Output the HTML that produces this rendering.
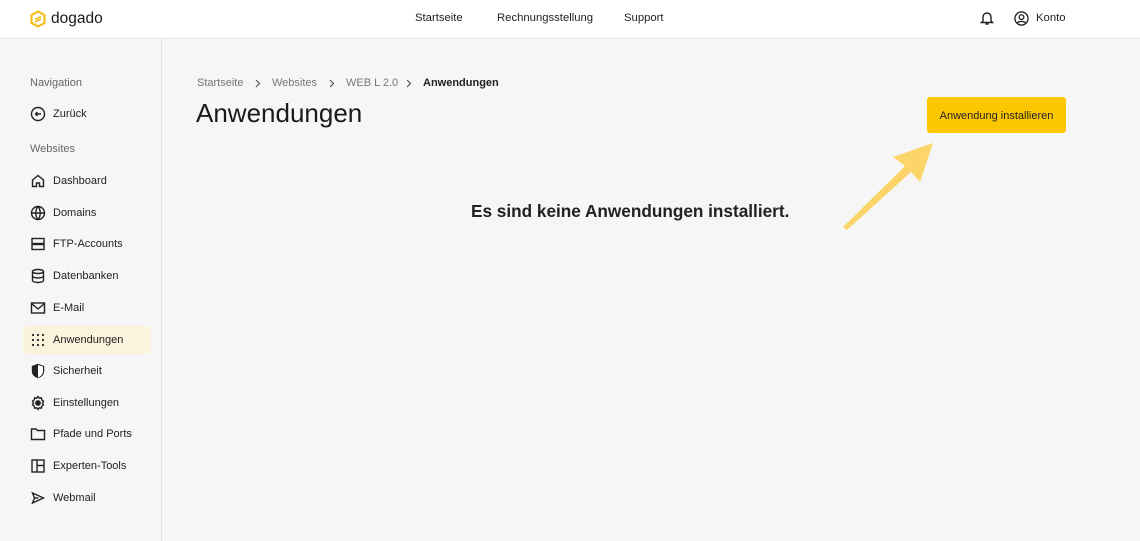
<!DOCTYPE html>
<html><head><meta charset="utf-8"><style>
*{box-sizing:border-box;margin:0;padding:0}
body{width:1140px;height:541px;overflow:hidden;background:#f6f6f6;font-family:"Liberation Sans",sans-serif;color:#222;position:relative}
.top{position:absolute;left:0;top:0;width:1140px;height:39px;background:#fff;border-bottom:1px solid #e6e6e6}
.logo{position:absolute;left:29px;top:10px;display:flex;align-items:center;gap:4px;font-size:15.5px;color:#1a1a1a}
.nav{position:absolute;top:12px;font-size:11.3px;color:#222}
.side{position:absolute;left:0;top:39px;width:162px;height:502px;border-right:1px solid #e4e4e4;background:#f6f6f6}
.sec{position:absolute;left:30px;font-size:11px;color:#666}
.item{position:absolute;left:23px;width:128px;height:28px;display:flex;align-items:center;padding-left:7px;font-size:11px;color:#222}
.item svg{width:16px;height:16px;margin-right:7px;fill:none;stroke:#222;stroke-width:1.4}
.act{background:#fbf3dc;border-radius:4px}
.bc{position:absolute;top:77px;font-size:11px;color:#777}
h1{position:absolute;left:196px;top:98px;font-size:26px;font-weight:normal;color:#1a1a1a}
.btn{position:absolute;left:927px;top:97px;width:139px;height:36px;background:#fcc700;border-radius:3px;font-size:11px;color:#222;display:flex;align-items:center;justify-content:center;padding-top:1px}
.empty{position:absolute;left:471px;top:201px;font-size:17.2px;font-weight:bold;color:#222}
</style></head><body>
<div class="top">
 <div class="logo"><svg width="18" height="18" viewBox="0 0 18 18"><path d="M9 1.5L15.5 5v8L9 16.5 2.5 13V5z" fill="none" stroke="#f3c01d" stroke-width="2.2"/><path d="M6 9.5l6-3M6 12l6-3" stroke="#f3c01d" stroke-width="1.8"/></svg>dogado</div>
 <div class="nav" style="left:415px">Startseite</div>
 <div class="nav" style="left:497px">Rechnungsstellung</div>
 <div class="nav" style="left:624px">Support</div>
 <svg style="position:absolute;left:980px;top:10px" width="14" height="16" viewBox="0 0 14 16" fill="none" stroke="#222" stroke-width="1.4"><path d="M3 11V7a4 4 0 018 0v4l1.5 1.5h-11zM5.5 14h3"/></svg>
 <svg style="position:absolute;left:1014px;top:11px" width="15" height="15" viewBox="0 0 16 16" fill="none" stroke="#222" stroke-width="1.4"><circle cx="8" cy="8" r="7"/><circle cx="8" cy="6.5" r="2.5"/><path d="M3.5 13c1.5-2.5 7.5-2.5 9 0"/></svg>
 <div class="nav" style="left:1036px;top:12px">Konto</div>
</div>
<div class="side">
 <div class="sec" style="top:38px">Navigation</div>
 <div class="item" style="top:61px"><svg viewBox="0 0 16 16"><circle cx="8" cy="8" r="6.5"/><path d="M11 8H5.5M7.5 6L5.5 8l2 2"/></svg>Zurück</div>
 <div class="sec" style="top:104px">Websites</div>
 <div class="item" style="top:128px"><svg viewBox="0 0 16 16"><path d="M2.5 7L8 2.5 13.5 7v6.5h-4V10h-3v3.5h-4z"/></svg>Dashboard</div>
 <div class="item" style="top:160px"><svg viewBox="0 0 16 16"><circle cx="8" cy="8" r="6.5"/><path d="M1.5 8h13M8 1.5c-3 3.5-3 9.5 0 13M8 1.5c3 3.5 3 9.5 0 13"/></svg>Domains</div>
 <div class="item" style="top:191px"><svg viewBox="0 0 16 16"><rect x="2" y="2.5" width="12" height="5"/><rect x="2" y="8.5" width="12" height="5"/></svg>FTP-Accounts</div>
 <div class="item" style="top:223px"><svg viewBox="0 0 16 16"><ellipse cx="8" cy="3.5" rx="5.5" ry="2"/><path d="M2.5 3.5v9c0 1 2.5 2 5.5 2s5.5-1 5.5-2v-9M2.5 8c0 1 2.5 2 5.5 2s5.5-1 5.5-2"/></svg>Datenbanken</div>
 <div class="item" style="top:255px"><svg viewBox="0 0 16 16"><rect x="1.5" y="3" width="13" height="10"/><path d="M1.5 3.5L8 9l6.5-5.5"/></svg>E-Mail</div>
 <div class="item act" style="top:287px"><svg viewBox="0 0 16 16" style="stroke:none;fill:#222"><circle cx="3" cy="3" r="1.1"/><circle cx="8" cy="3" r="1.1"/><circle cx="13" cy="3" r="1.1"/><circle cx="3" cy="8" r="1.1"/><circle cx="8" cy="8" r="1.1"/><circle cx="13" cy="8" r="1.1"/><circle cx="3" cy="13" r="1.1"/><circle cx="8" cy="13" r="1.1"/><circle cx="13" cy="13" r="1.1"/></svg>Anwendungen</div>
 <div class="item" style="top:318px"><svg viewBox="0 0 16 16"><path d="M8 1.5l5.5 2v4.5c0 3.5-2.5 5.5-5.5 6.5-3-1-5.5-3-5.5-6.5V3.5z" fill="#222"/><path d="M8 2v12.5c2.5-1 5-3 5-6.5V3.5z" fill="#fff" stroke="none"/></svg>Sicherheit</div>
 <div class="item" style="top:350px"><svg viewBox="0 0 16 16"><circle cx="8" cy="8" r="2.2" fill="#222"/><path d="M8 1.5l1.3 1.7 2.1-.4.4 2.1 1.7 1.3-1 1.8 1 1.8-1.7 1.3-.4 2.1-2.1-.4L8 14.5l-1.3-1.7-2.1.4-.4-2.1-1.7-1.3 1-1.8-1-1.8 1.7-1.3.4-2.1 2.1.4z"/></svg>Einstellungen</div>
 <div class="item" style="top:381px"><svg viewBox="0 0 16 16"><path d="M1.5 3h4.5l1.5 1.5h7v9h-13z"/></svg>Pfade und Ports</div>
 <div class="item" style="top:413px"><svg viewBox="0 0 16 16"><rect x="2" y="2" width="12" height="12"/><path d="M7 2v12M7 7.5h7"/></svg>Experten-Tools</div>
 <div class="item" style="top:445px"><svg viewBox="0 0 16 16"><path d="M2.5 3l11 5-11 5 2-5zM4.5 8h4"/></svg>Webmail</div>
</div>
<div class="bc" style="left:197px">Startseite</div>
<svg style="position:absolute;left:255px;top:79px" width="6" height="9" viewBox="0 0 6 9" fill="none" stroke="#555" stroke-width="1.2"><path d="M1 1l3.5 3.5L1 8"/></svg>
<div class="bc" style="left:272px">Websites</div>
<svg style="position:absolute;left:329px;top:79px" width="6" height="9" viewBox="0 0 6 9" fill="none" stroke="#555" stroke-width="1.2"><path d="M1 1l3.5 3.5L1 8"/></svg>
<div class="bc" style="left:346px">WEB L 2.0</div>
<svg style="position:absolute;left:406px;top:79px" width="6" height="9" viewBox="0 0 6 9" fill="none" stroke="#555" stroke-width="1.2"><path d="M1 1l3.5 3.5L1 8"/></svg>
<div class="bc" style="left:423px;color:#222;font-weight:bold">Anwendungen</div>
<h1>Anwendungen</h1>
<div class="btn">Anwendung installieren</div>
<svg style="position:absolute;left:0;top:0" width="1140" height="541"><polygon points="843,227 905,166 893,157 933,143 920,182 911,172 847,230" fill="#fcd56a"/></svg>
<div class="empty">Es sind keine Anwendungen installiert.</div>
</body></html>
